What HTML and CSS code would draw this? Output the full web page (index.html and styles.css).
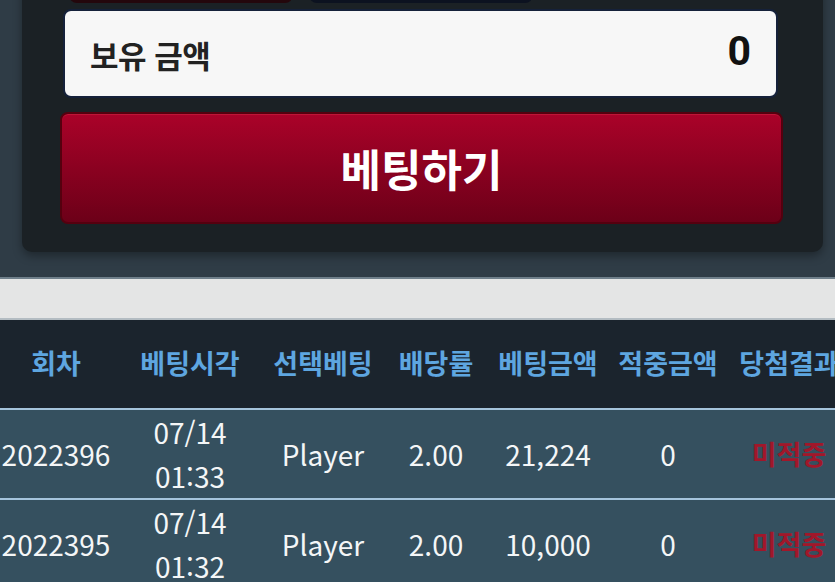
FILE: index.html
```html
<!DOCTYPE html>
<html lang="ko">
<head>
    <meta charset="UTF-8">
    <meta name="viewport" content="width=device-width, initial-scale=1.0">
    <title>베팅</title>
    <link rel="stylesheet" href="styles.css">
</head>
<body>

<div class="screen">
    <section class="bet-panel">
        <div class="bet-tabs">
            <span class="tab tab-red"></span>
            <span class="tab tab-navy"></span>
        </div>
        <div class="balance">
            <span class="balance-label">보유 금액</span>
            <span class="balance-value">0</span>
        </div>
        <button class="bet-button">베팅하기</button>
    </section>
</div>

<div class="band"></div>

<div class="history-wrap">
    <table class="history">
        <colgroup>
            <col style="width:112px">
            <col style="width:156px">
            <col style="width:110px">
            <col style="width:116px">
            <col style="width:108px">
            <col style="width:132px">
            <col style="width:110px">
        </colgroup>
        <thead>
            <tr>
                <th>회차</th>
                <th>베팅시각</th>
                <th>선택베팅</th>
                <th>배당률</th>
                <th>베팅금액</th>
                <th>적중금액</th>
                <th>당첨결과</th>
            </tr>
        </thead>
        <tbody>
            <tr>
                <td>2022396</td>
                <td>07/14<br>01:33</td>
                <td>Player</td>
                <td>2.00</td>
                <td>21,224</td>
                <td>0</td>
                <td class="result">미적중</td>
            </tr>
            <tr>
                <td>2022395</td>
                <td>07/14<br>01:32</td>
                <td>Player</td>
                <td>2.00</td>
                <td>10,000</td>
                <td>0</td>
                <td class="result">미적중</td>
            </tr>
        </tbody>
    </table>
</div>

</body>
</html>
```

FILE: styles.css
```css
body {
    margin: 0;
    padding: 0;
    background-color: #35505f;
    font-family: "Noto Sans CJK KR", "Noto Sans", sans-serif;
    overflow: hidden;
}
.screen {
    background-color: #2f3c46;
    margin-top: -37px;
    padding: 0 12px 25px 22px;
    border-bottom: 2px solid #6f7f8a;
}
.bet-panel {
    background-color: #1b2125;
    border-radius: 0 0 10px 10px;
    padding: 0 40px 28px 38px;
    box-shadow: 0 4px 10px rgba(0, 0, 0, 0.35);
}
.bet-tabs {
    display: flex;
    gap: 16px;
    height: 40px;
    padding-left: 9px;
    margin-bottom: 6px;
}
.tab {
    width: 224px;
    border-radius: 0 0 8px 8px;
}
.tab-red {
    background-color: #24070c;
}
.tab-navy {
    background-color: #0c1220;
}
.balance {
    display: flex;
    align-items: center;
    justify-content: space-between;
    height: 83px;
    margin: 0 5px 14px 3px;
    padding: 2px 25px 0 25px;
    background-color: #f7f7f7;
    border: 2px solid #15213a;
    border-radius: 8px;
}
.balance-label {
    font-size: 31px;
    font-weight: 700;
    color: #222;
    letter-spacing: -0.5px;
}
.balance-value {
    font-family: Roboto, "Liberation Sans", sans-serif;
    font-size: 41px;
    font-weight: 700;
    color: #111;
    margin-top: -8px;
}
.bet-button {
    display: block;
    width: 100%;
    height: 112px;
    padding: 0;
    border: 2px solid #55000f;
    border-radius: 8px;
    background: linear-gradient(#aa0229, #6c0018);
    color: #fff;
    font-family: "Noto Sans CJK KR", sans-serif;
    font-size: 44px;
    font-weight: 700;
    box-shadow: inset 0 1px 0 rgba(255, 80, 100, 0.25);
    cursor: pointer;
}
.band {
    height: 39px;
    background-color: #e4e5e5;
    border-bottom: 2px solid #b3bcc2;
}
.history-wrap {
    overflow: hidden;
}
.history {
    width: 844px;
    table-layout: fixed;
    border-collapse: collapse;
}
.history th {
    height: 84px;
    padding: 0 0 4px;
    background-color: #1b242d;
    color: #5ea6e0;
    font-size: 27px;
    font-weight: 700;
    white-space: nowrap;
    border-bottom: 2px solid #a5c4dc;
}
.history td {
    height: 88px;
    padding: 0;
    background-color: #35505f;
    color: #f4f6f7;
    font-size: 28px;
    line-height: 44px;
    text-align: center;
    white-space: nowrap;
    border-bottom: 2px solid #a5c4dc;
}
.history td.result {
    color: #a1172a;
    font-size: 27px;
    font-weight: 700;
}
```
